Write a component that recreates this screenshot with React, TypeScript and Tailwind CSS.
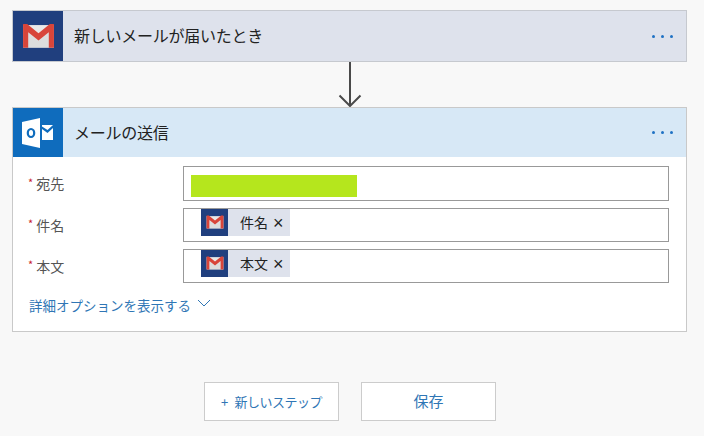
const font = { fontFamily: '"Noto Sans CJK JP", "Liberation Sans", sans-serif' }

function GmailIcon({ size }: { size: number }) {
  return (
    <svg width={size} height={size * 0.78} viewBox="0 0 32 25">
      <path d="M1 2 L31 2 L31 24 L1 24 Z" fill="#e9e9e9" />
      <path d="M6 24 L6 9 L16 17 L26 9 L31 24 Z" fill="#d6d6d6" opacity="0.6" />
      <path d="M1 1 L5 1 L16 10 L27 1 L31 1 L31 24 L26 24 L26 9 L16 17 L6 9 L6 24 L1 24 Z" fill="#d8453a" />
    </svg>
  )
}

function OutlookIcon() {
  return (
    <svg className="-ml-[2px]" width="32" height="32" viewBox="0 0 32 32">
      <path d="M1 5 L19 1 L19 31 L1 27 Z" fill="#fff" />
      <path d="M21 8 L32 8 L26.5 13 L21 9.5 Z" fill="#fff" />
      <path d="M21 12 L26.5 16 L32 11 L32 23 L21 23 Z" fill="#fff" />
      <ellipse cx="10" cy="16" rx="3.2" ry="4" fill="none" stroke="#0f6cbd" strokeWidth="2.2" />
    </svg>
  )
}

function Dots() {
  return (
    <div className="flex gap-[6px] mr-[13px]">
      <span className="w-[3px] h-[3px] rounded-full bg-[#1f72c4]" />
      <span className="w-[3px] h-[3px] rounded-full bg-[#1f72c4]" />
      <span className="w-[3px] h-[3px] rounded-full bg-[#1f72c4]" />
    </div>
  )
}

function Label({ text }: { text: string }) {
  return (
    <div className="w-[170px] pl-[15px] flex items-center text-[14px] text-[#555]">
      <span className="text-[#c8202c] text-[11px] mr-[3px] -mt-[3px]">*</span>
      {text}
    </div>
  )
}

function Chip({ text }: { text: string }) {
  return (
    <div className="ml-[17px] flex items-center h-[27px] w-[89px] bg-[#dee2ec]">
      <div className="w-[27px] h-[27px] bg-[#203f7e] flex items-center justify-center">
        <GmailIcon size={18} />
      </div>
      <span className="ml-[12px] text-[14px] text-[#222]">{text}</span>
      <span className="ml-[5px] text-[18px] leading-none text-[#222] font-['Liberation_Sans']">×</span>
    </div>
  )
}

export default function App() {
  return (
    <div className="w-[704px] h-[436px] overflow-hidden bg-[#f8f8f8] pt-[10px] pl-[12px]" style={font}>
      <div className="w-[675px] h-[52px] border border-[#c6c9cf] bg-[#dee2ec] flex items-center">
        <div className="w-[50px] h-[50px] bg-[#203f7e] flex items-center justify-center">
          <GmailIcon size={33} />
        </div>
        <span className="ml-[11px] -mt-[2px] text-[16px] tracking-[-0.25px] text-[#222] flex-1">新しいメールが届いたとき</span>
        <Dots />
      </div>

      <div className="w-[675px] h-[45px] flex justify-center">
        <svg width="24" height="45" viewBox="0 0 24 45">
          <path d="M12 0 V44 M1.5 33.5 L12 44 L22.5 33.5" fill="none" stroke="#4a4a4a" strokeWidth="2" />
        </svg>
      </div>

      <div className="w-[675px] h-[225px] border border-[#c9c9c9] bg-white">
        <div className="h-[49px] bg-[#d7e8f6] flex items-center">
          <div className="w-[50px] h-[49px] bg-[#0f6cbd] flex items-center justify-center">
            <OutlookIcon />
          </div>
          <span className="ml-[11px] -mt-[2px] text-[16px] tracking-[-0.25px] text-[#222] flex-1">メールの送信</span>
          <Dots />
        </div>

        <div className="pt-[9px] flex flex-col gap-[7px]">
          <div className="flex h-[35px]">
            <Label text="宛先" />
            <div className="w-[486px] border border-[#999] pl-[7px] pt-[8px]">
              <div className="w-[166px] h-[22px] bg-[#b5e61d]" />
            </div>
          </div>
          <div className="flex h-[34px]">
            <Label text="件名" />
            <div className="w-[486px] border border-[#999]">
              <Chip text="件名" />
            </div>
          </div>
          <div className="flex h-[34px]">
            <Label text="本文" />
            <div className="w-[486px] border border-[#999]">
              <Chip text="本文" />
            </div>
          </div>
        </div>

        <div className="mt-[12px] ml-[16px] flex items-center text-[13.5px] text-[#2f76b5]">
          詳細オプションを表示する
          <svg className="ml-[6px] -mt-[4px]" width="14" height="8" viewBox="0 0 14 8">
            <path d="M1 1 L7 7 L13 1" fill="none" stroke="#2f76b5" strokeWidth="1" />
          </svg>
        </div>
      </div>

      <div className="mt-[50px] ml-[192px] flex gap-[22px]">
        <div className="w-[135px] h-[39px] border border-[#ccc] bg-white flex items-center justify-center text-[13px] tracking-[-0.5px] text-[#2f76b5]">
          <span className="mr-[7px]">+</span>新しいステップ
        </div>
        <div className="w-[135px] h-[39px] border border-[#ccc] bg-white flex items-center justify-center text-[15px] text-[#2f76b5]">
          保存
        </div>
      </div>
    </div>
  )
}
